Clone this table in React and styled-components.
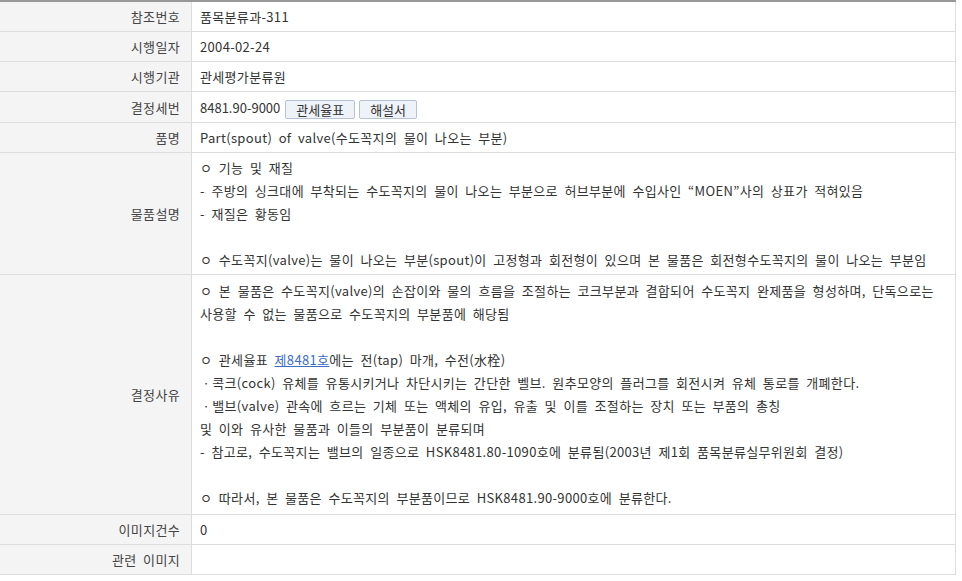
import React from "react";
import styled, { createGlobalStyle } from "styled-components";

const Global = createGlobalStyle`
  html, body { margin: 0; padding: 0; background: #fff; }
  body { font-family: "Noto Sans CJK KR", "Open Sans", sans-serif; font-size: 13px; color: #333; }
`;

const Table = styled.table`
  width: 956px;
  border-collapse: collapse;
  border-top: 2px solid #999;
  table-layout: fixed;
  letter-spacing: 0.33px;
  word-spacing: 3.3px;
`;

const Label = styled.th`
  width: 180px;
  background: #f4f4f4;
  color: #444;
  font-weight: normal;
  text-align: right;
  padding: 3px 11px 3px 0;
  border-right: 1px solid #ddd;
  border-bottom: 1px solid #ddd;
  line-height: 23px;
  vertical-align: middle;
`;

const Value = styled.td`
  padding: ${(p) => (p.$pad ? p.$pad : "3px 8px")};
  border-right: 1px solid #ddd;
  border-bottom: 1px solid #ddd;
  line-height: 23px;
  color: #333;
  vertical-align: middle;
`;

const Code = styled.span`
  letter-spacing: 0;
`;

const Btn = styled.button`
  font-family: inherit;
  font-size: 13px;
  letter-spacing: 0;
  word-spacing: 0;
  color: #333;
  background: #eef2f9;
  border: 1px solid #b7c2d6;
  border-radius: 2px;
  height: 19px;
  line-height: 15px;
  padding: 0 10px;
  margin-left: ${(p) => p.$ml || "4px"};
  vertical-align: middle;
  cursor: pointer;
`;

const Link = styled.a`
  color: #3a6cc8;
  text-decoration: underline;
`;

export default function App() {
  return (
    <>
      <Global />
      <Table>
        <tbody>
          <tr>
            <Label>참조번호</Label>
            <Value>품목분류과-311</Value>
          </tr>
          <tr>
            <Label>시행일자</Label>
            <Value>2004-02-24</Value>
          </tr>
          <tr>
            <Label>시행기관</Label>
            <Value>관세평가분류원</Value>
          </tr>
          <tr>
            <Label>결정세번</Label>
            <Value $pad="4px 8px 3px">
              <Code>8481.90-9000</Code>
              <Btn $ml="5px">관세율표</Btn>
              <Btn>해설서</Btn>
            </Value>
          </tr>
          <tr>
            <Label>품명</Label>
            <Value>Part(spout) of valve(수도꼭지의 물이 나오는 부분)</Value>
          </tr>
          <tr>
            <Label>물품설명</Label>
            <Value>
              ㅇ 기능 및 재질
              <br />- 주방의 싱크대에 부착되는 수도꼭지의 물이 나오는 부분으로 허브부분에 수입사인 “MOEN”사의 상표가 적혀있음
              <br />- 재질은 황동임
              <br />
              <br />ㅇ 수도꼭지(valve)는 물이 나오는 부분(spout)이 고정형과 회전형이 있으며 본 물품은 회전형수도꼭지의 물이 나오는 부분임
            </Value>
          </tr>
          <tr>
            <Label>결정사유</Label>
            <Value $pad="4px 8px 5px">
              ㅇ 본 물품은 수도꼭지(valve)의 손잡이와 물의 흐름을 조절하는 코크부분과 결합되어 수도꼭지 완제품을 형성하며, 단독으로는
              <br />사용할 수 없는 물품으로 수도꼭지의 부분품에 해당됨
              <br />
              <br />ㅇ 관세율표 <Link href="#">제8481호</Link>에는 전(tap) 마개, 수전(水栓)
              <br />ㆍ콕크(cock) 유체를 유통시키거나 차단시키는 간단한 벨브. 원추모양의 플러그를 회전시켜 유체 통로를 개폐한다.
              <br />ㆍ밸브(valve) 관속에 흐르는 기체 또는 액체의 유입, 유출 및 이를 조절하는 장치 또는 부품의 총칭
              <br />및 이와 유사한 물품과 이들의 부분품이 분류되며
              <br />- 참고로, 수도꼭지는 밸브의 일종으로 HSK8481.80-1090호에 분류됨(2003년 제1회 품목분류실무위원회 결정)
              <br />
              <br />ㅇ 따라서, 본 물품은 수도꼭지의 부분품이므로 HSK8481.90-9000호에 분류한다.
            </Value>
          </tr>
          <tr>
            <Label>이미지건수</Label>
            <Value>0</Value>
          </tr>
          <tr>
            <Label>관련 이미지</Label>
            <Value></Value>
          </tr>
        </tbody>
      </Table>
    </>
  );
}
